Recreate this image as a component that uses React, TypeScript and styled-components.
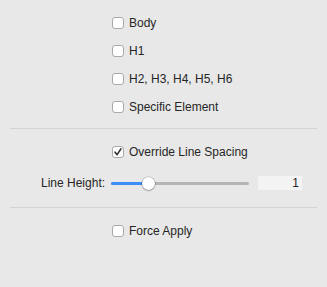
import styled, { createGlobalStyle } from 'styled-components';

const GlobalStyle = createGlobalStyle`
  html, body {
    margin: 0;
    padding: 0;
    background: #e8e8e8;
  }
  body {
    font-family: "Liberation Sans", Arial, sans-serif;
    font-size: 12px;
    color: #262626;
  }
`;

const Panel = styled.div`
  width: 327px;
  height: 287px;
  background: #e8e8e8;
  display: flex;
  flex-direction: column;
`;

const Section = styled.div`
  display: flex;
  flex-direction: column;
  padding-top: 9px;
`;

const Row = styled.label<{ $h?: number }>`
  display: flex;
  align-items: center;
  height: ${(p) => p.$h ?? 28}px;
  padding-left: 112px;
  gap: 5px;
`;

const Box = styled.span<{ $checked?: boolean }>`
  width: 12px;
  height: 12px;
  box-sizing: border-box;
  border: 1px solid #a9a9a9;
  border-radius: 3px;
  background: #ffffff;
  display: flex;
  align-items: center;
  justify-content: center;
  flex: none;
`;

const Text = styled.span`
  line-height: 14px;
  white-space: nowrap;
`;

const Divider = styled.div`
  height: 1px;
  background: #d3d3d3;
  margin: 7px 10px 0 10px;
`;

const SliderRow = styled.div`
  display: flex;
  align-items: center;
  height: 34px;
  padding-left: 41px;
`;

const Label = styled.span`
  width: 70px;
  white-space: nowrap;
`;

const Track = styled.div`
  position: relative;
  width: 138px;
  height: 3px;
  border-radius: 2px;
  background: #b5b5b5;
`;

const Fill = styled.div`
  height: 3px;
  border-radius: 2px;
  background: #3d8ef7;
`;

const Thumb = styled.div`
  position: absolute;
  top: 50%;
  width: 13px;
  height: 13px;
  margin-left: -6.5px;
  margin-top: -6.5px;
  border-radius: 50%;
  background: #ffffff;
  box-shadow: 0 0 0 0.5px rgba(0, 0, 0, 0.25), 0 1px 1.5px rgba(0, 0, 0, 0.25);
`;

const Field = styled.div`
  margin-left: 9px;
  width: 44px;
  height: 14px;
  background: #f3f3f3;
  text-align: right;
  line-height: 14px;
  padding-right: 3px;
  box-sizing: border-box;
`;

function CheckBox({ label, checked }: { label: string; checked?: boolean }) {
  return (
    <Row>
      <Box $checked={checked}>
        {checked && (
          <svg width="10" height="10" viewBox="0 0 10 10">
            <path d="M2 5.2 L4.1 7.6 L8 1.8" fill="none" stroke="#333" strokeWidth="1.6" strokeLinecap="round" strokeLinejoin="round" />
          </svg>
        )}
      </Box>
      <Text>{label}</Text>
    </Row>
  );
}

export default function App() {
  const value = 1;
  const pct = 27;
  return (
    <>
      <GlobalStyle />
      <Panel>
        <Section>
          <CheckBox label="Body" />
          <CheckBox label="H1" />
          <CheckBox label="H2, H3, H4, H5, H6" />
          <CheckBox label="Specific Element" />
        </Section>
        <Divider />
        <Section>
          <CheckBox label="Override Line Spacing" checked />
          <SliderRow>
            <Label>Line Height:</Label>
            <Track>
              <Fill style={{ width: `${pct}%` }} />
              <Thumb style={{ left: `${pct}%` }} />
            </Track>
            <Field>{value}</Field>
          </SliderRow>
        </Section>
        <Divider />
        <Section>
          <CheckBox label="Force Apply" />
        </Section>
      </Panel>
    </>
  );
}
